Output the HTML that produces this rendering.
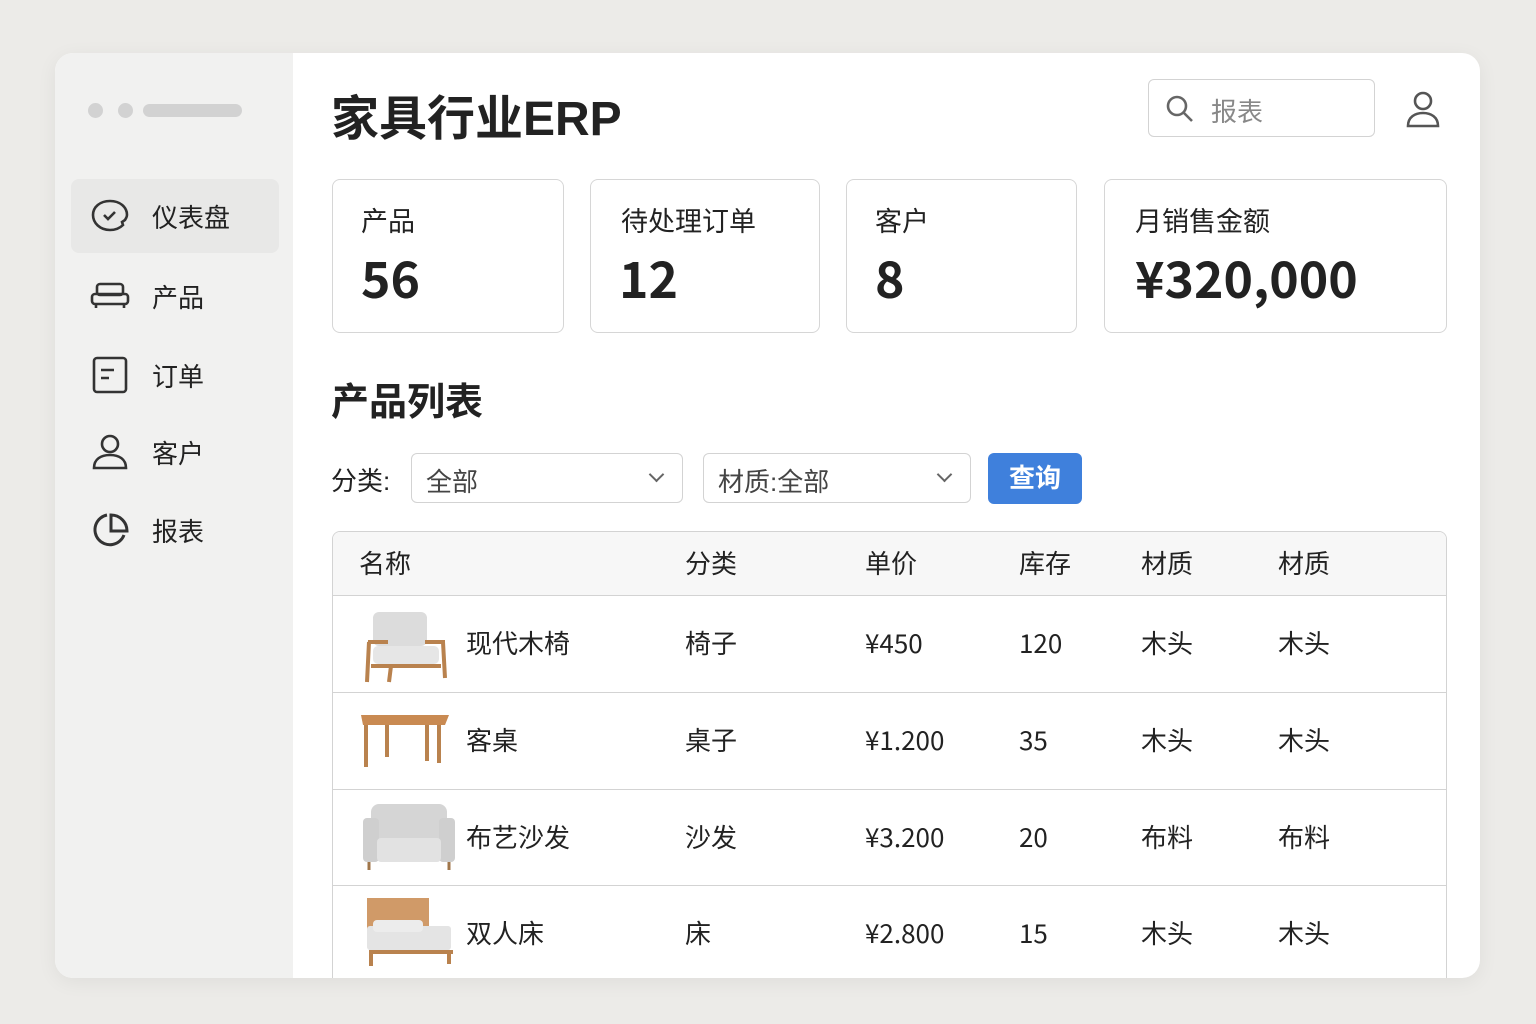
<!DOCTYPE html>
<html><head><meta charset="utf-8"><style>
*{margin:0;padding:0;box-sizing:border-box}
body{width:1536px;height:1024px;background:#ecebe8;font-family:"Liberation Sans","Noto Sans CJK SC",sans-serif;color:#222;position:relative;overflow:hidden}
.card{position:absolute;left:55px;top:53px;width:1425px;height:925px;background:#fff;border-radius:18px;overflow:hidden;box-shadow:0 4px 20px rgba(0,0,0,.06)}
.side{position:absolute;left:0;top:0;width:238px;height:100%;background:#f1f1f0}
.a{position:absolute}
.nav{position:absolute;left:16px;width:208px;height:74px;display:flex;align-items:center;font-size:26px}
.nav svg{margin-left:19px;margin-right:22px}
.stat{position:absolute;top:126px;height:154px;border:1.5px solid #d6d6d6;border-radius:8px}
.stat .l{position:absolute;left:28px;top:24px;font-size:27px;line-height:36px}
.stat .v{position:absolute;left:28px;top:62px;font-size:50px;font-weight:600;font-family:"Noto Sans CJK SC",sans-serif;line-height:70px}
.sel{position:absolute;top:400px;height:50px;border:1.5px solid #d3d3d3;border-radius:6px;font-size:26px;color:#444;padding:8px 14px}
.sel:after{content:"";position:absolute;right:20px;top:15px;width:9px;height:9px;border-right:2px solid #666;border-bottom:2px solid #666;transform:rotate(45deg)}
.tbl{position:absolute;left:277px;top:478px;width:1115px;height:460px;border:1.5px solid #d3d3d3;border-radius:8px;overflow:hidden;font-family:"Noto Sans CJK SC",sans-serif}
.row{position:absolute;left:0;width:100%;font-size:26px;border-top:1.5px solid #d3d3d3}
.row span{position:absolute;line-height:34px}
</style></head><body>
<div class="card">
<div class="side">
<div class="a" style="left:33px;top:50px;width:15px;height:15px;border-radius:50%;background:#d2d2d2"></div>
<div class="a" style="left:63px;top:50px;width:15px;height:15px;border-radius:50%;background:#d2d2d2"></div>
<div class="a" style="left:88px;top:51px;width:99px;height:13px;border-radius:7px;background:#d2d2d2"></div>
<div class="nav" style="top:126px;background:#e8e8e7;border-radius:8px"><svg width="40" height="36" viewBox="0 0 40 36" fill="none" stroke="#333" stroke-width="2.6"><path d="M20 3C10 3 3 9 3 17s7 15 17 15c6 0 10-2 13-5l-1-3 3-2c1-2 2-3 2-5C37 9 30 3 20 3z"/><path d="M14 17l4 4 7-7"/></svg>仪表盘</div>
<div class="nav" style="top:206px"><svg width="40" height="30" viewBox="0 0 40 30" fill="none" stroke="#333" stroke-width="2.6"><rect x="7" y="3" width="26" height="11" rx="3"/><rect x="2" y="13" width="36" height="10" rx="3"/><path d="M6 23v4M34 23v4"/></svg>产品</div>
<div class="nav" style="top:285px"><svg width="40" height="38" viewBox="0 0 40 38" fill="none" stroke="#333" stroke-width="2.6"><rect x="4" y="2" width="32" height="34" rx="3"/><path d="M11 14h13M11 22h8"/></svg>订单</div>
<div class="nav" style="top:362px"><svg width="40" height="38" viewBox="0 0 40 38" fill="none" stroke="#333" stroke-width="2.6"><circle cx="20" cy="11" r="8"/><path d="M4 35c0-9 7-13 16-13s16 4 16 13z"/></svg>客户</div>
<div class="nav" style="top:440px"><svg width="40" height="38" viewBox="0 0 40 38" fill="none" stroke="#333" stroke-width="3"><path d="M17 4A15 15 0 1 0 34 24"/><path d="M21 4v16h16A16 16 0 0 0 21 4z"/></svg>报表</div>
</div>
<div class="a" style="left:276px;top:26px;font-size:48px;font-weight:700;color:#222">家具行业ERP</div>
<div class="a" style="left:1093px;top:26px;width:227px;height:58px;border:1.5px solid #d3d3d3;border-radius:6px;font-size:26px;color:#888;padding:12px 0 0 62px">报表
<svg class="a" style="left:16px;top:14px" width="30" height="30" viewBox="0 0 30 30" fill="none" stroke="#666" stroke-width="2.6"><circle cx="12" cy="12" r="9"/><path d="M19 19l8 8"/></svg></div>
<svg class="a" style="left:1351px;top:37px" width="34" height="38" viewBox="0 0 34 38" fill="none" stroke="#555" stroke-width="2.6"><circle cx="17" cy="11" r="8"/><path d="M2 36c0-9 7-13 15-13s15 4 15 13z"/></svg>
<div class="stat" style="left:277px;width:232px"><div class="l">产品</div><div class="v">56</div></div>
<div class="stat" style="left:535px;width:230px"><div class="l" style="left:30px">待处理订单</div><div class="v">12</div></div>
<div class="stat" style="left:791px;width:231px"><div class="l">客户</div><div class="v">8</div></div>
<div class="stat" style="left:1049px;width:343px"><div class="l" style="left:30px">月销售金额</div><div class="v" style="left:30px">¥320,000</div></div>
<div class="a" style="left:276px;top:318px;font-size:38px;font-weight:700">产品列表</div>
<div class="a" style="left:276px;top:408px;font-size:26px">分类:</div>
<div class="sel" style="left:356px;width:272px">全部</div>
<div class="sel" style="left:648px;width:268px">材质:全部</div>
<div class="a" style="left:933px;top:400px;width:94px;height:51px;background:#3f80dc;border-radius:6px;color:#fff;font-size:26px;font-weight:700;text-align:center;line-height:51px">查询</div>
<div class="tbl">
<div class="row" style="top:0;height:63px;background:#f7f7f7;border-top:none"><span style="left:26px;top:14px">名称</span><span style="left:352px;top:14px">分类</span><span style="left:532px;top:14px">单价</span><span style="left:686px;top:14px">库存</span><span style="left:808px;top:14px">材质</span><span style="left:945px;top:14px">材质</span></div>
<div class="row" style="top:63px;height:97px">
<svg class="a" style="left:32px;top:14px" width="82" height="74" viewBox="0 0 82 74"><rect x="8" y="2" width="54" height="34" rx="6" fill="#dcdcdc"/><rect x="8" y="36" width="66" height="18" rx="5" fill="#e6e6e6"/><path d="M3 32h20M60 32h20M4 32l-2 40M78 32l2 36M26 56l-2 16M6 56h70" stroke="#b9824e" stroke-width="4" fill="none"/></svg>
<span style="left:133px;top:30px">现代木椅</span><span style="left:352px;top:30px">椅子</span><span style="left:532px;top:30px">¥450</span><span style="left:686px;top:30px">120</span><span style="left:808px;top:30px">木头</span><span style="left:945px;top:30px">木头</span></div>
<div class="row" style="top:160px;height:97px">
<svg class="a" style="left:26px;top:20px" width="92" height="56" viewBox="0 0 92 56"><path d="M2 2h88l-4 10H4z" fill="#c98a52"/><path d="M7 12v42M80 12v38M28 12v32M68 12v36" stroke="#b9824e" stroke-width="4"/></svg>
<span style="left:133px;top:30px">客桌</span><span style="left:352px;top:30px">桌子</span><span style="left:532px;top:30px">¥1.200</span><span style="left:686px;top:30px">35</span><span style="left:808px;top:30px">木头</span><span style="left:945px;top:30px">木头</span></div>
<div class="row" style="top:257px;height:96px">
<svg class="a" style="left:28px;top:12px" width="96" height="70" viewBox="0 0 96 70"><rect x="10" y="2" width="76" height="36" rx="8" fill="#d5d5d5"/><rect x="2" y="16" width="16" height="44" rx="4" fill="#cfcfcf"/><rect x="78" y="16" width="16" height="44" rx="4" fill="#cfcfcf"/><rect x="16" y="36" width="64" height="24" rx="4" fill="#e2e2e2"/><path d="M8 60v8M88 60v8" stroke="#a0764a" stroke-width="3"/></svg>
<span style="left:133px;top:30px">布艺沙发</span><span style="left:352px;top:30px">沙发</span><span style="left:532px;top:30px">¥3.200</span><span style="left:686px;top:30px">20</span><span style="left:808px;top:30px">布料</span><span style="left:945px;top:30px">布料</span></div>
<div class="row" style="top:353px;height:96px">
<svg class="a" style="left:28px;top:10px" width="96" height="72" viewBox="0 0 96 72"><rect x="6" y="2" width="62" height="40" fill="#d09a68"/><rect x="6" y="30" width="84" height="24" rx="3" fill="#e4e4e4"/><rect x="12" y="24" width="50" height="12" rx="4" fill="#ececec"/><path d="M8 56h84M10 56v14M88 56v12" stroke="#b9824e" stroke-width="4"/></svg>
<span style="left:133px;top:30px">双人床</span><span style="left:352px;top:30px">床</span><span style="left:532px;top:30px">¥2.800</span><span style="left:686px;top:30px">15</span><span style="left:808px;top:30px">木头</span><span style="left:945px;top:30px">木头</span></div>
</div>
</div>
</body></html>
